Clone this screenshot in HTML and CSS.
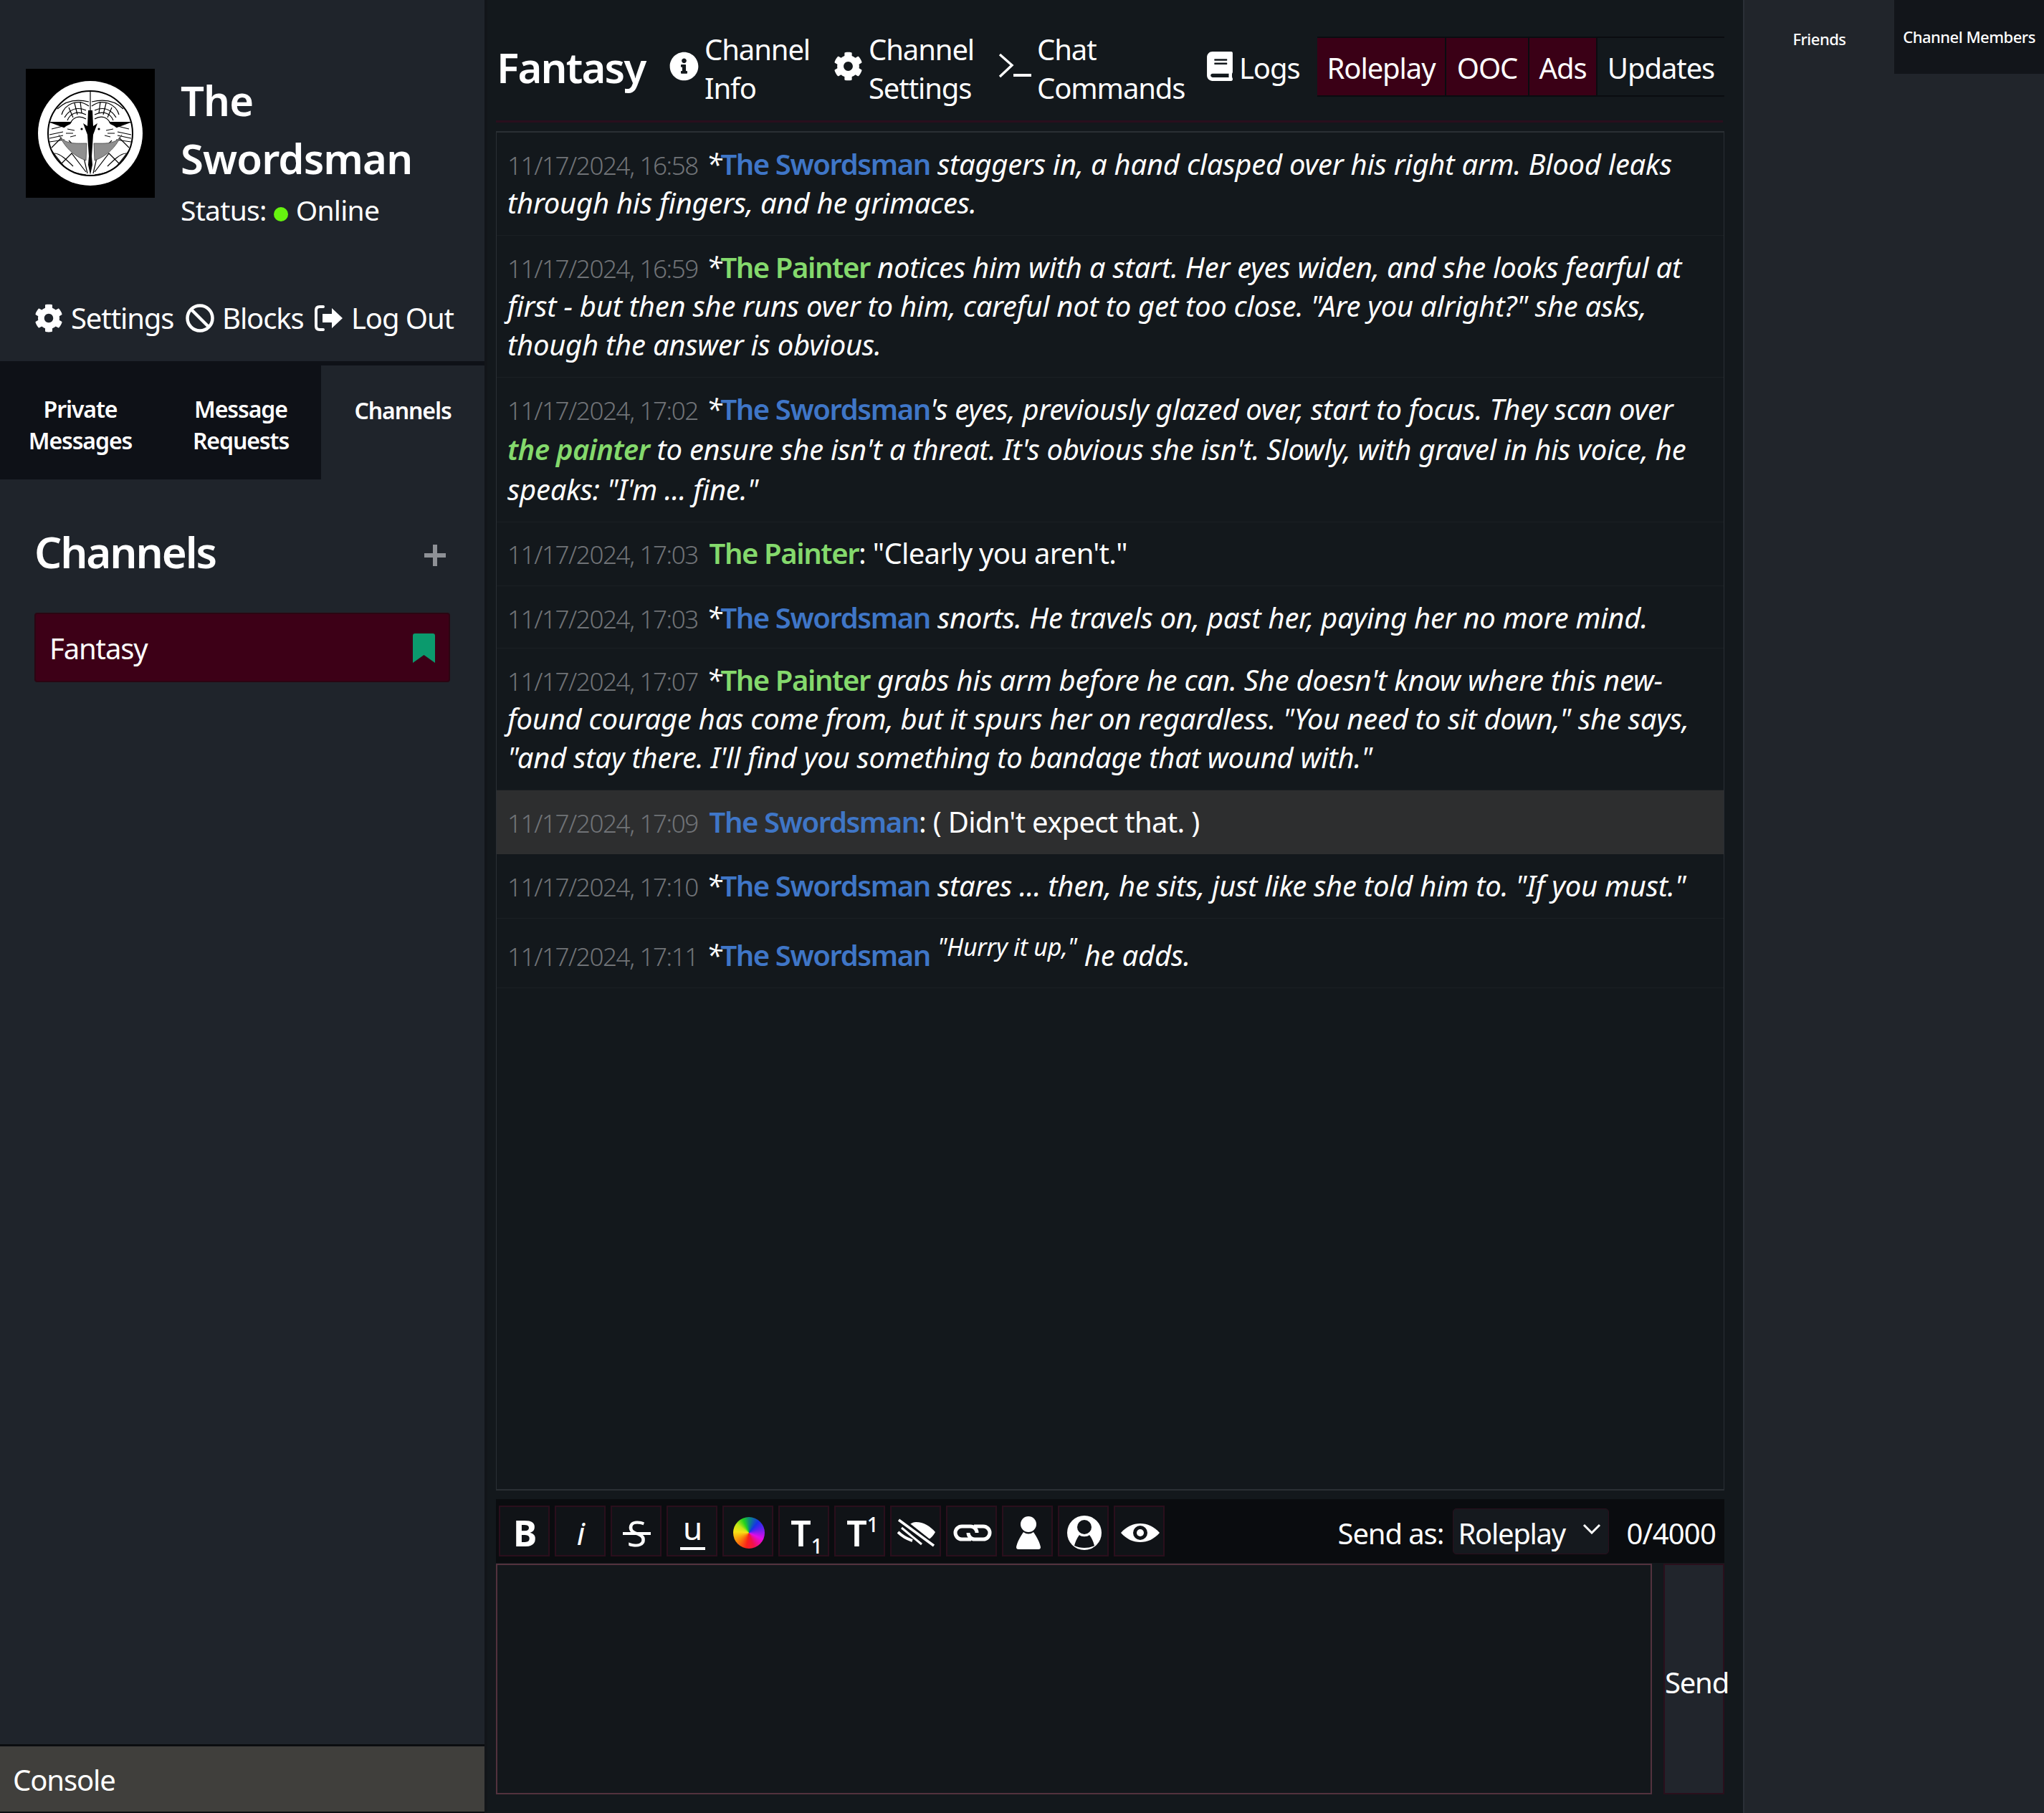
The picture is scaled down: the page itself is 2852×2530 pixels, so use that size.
FILE: index.html
```html
<!DOCTYPE html>
<html lang="en">
<head>
<meta charset="utf-8">
<title>Fantasy</title>
<link rel="stylesheet" href="styles.css">
</head>
<body>
<div class="app">
  <aside class="sidebar">
    <div class="profile">
      <svg class="avatar" viewBox="0 0 180 180">
        <rect width="180" height="180" fill="#000"/>
        <circle cx="90" cy="90" r="73" fill="#fff"/>
        <circle cx="90" cy="90" r="59" fill="#fff" stroke="#000" stroke-width="2"/>
        <g fill="none" stroke="#000" stroke-width="1.2">
          <path d="M90 31V64"/>
          <path d="M44 56C56 44 72 42 88 46M136 56C124 44 108 42 92 46"/>
          <path d="M50 64C54 50 72 40 88 52M130 64C126 50 108 40 92 52"/>
          <path d="M54 68C60 58 70 52 84 58M126 68C120 58 110 52 96 58"/>
          <path d="M58 72C62 62 72 58 84 64M122 72C118 62 108 58 96 64"/>
          <path d="M62 76C66 68 74 64 84 70M118 76C114 68 106 64 96 70"/>
          <path d="M60 54L66 68M68 48L72 64M76 46L78 62M120 54L114 68M112 48L108 64M104 46L102 62"/>
          <path d="M33 92L52 88M33 97L52 93M33 102L54 99M147 92L128 88M147 97L128 93M147 102L126 99"/>
          <path d="M36 84L52 80M144 84L128 80"/>
          <path d="M36 110L50 96M144 110L130 96"/>
          <path d="M40 118C48 118 58 128 66 136M140 118C132 118 122 128 114 136"/>
          <path d="M36 114L50 132L64 118L84 144M144 114L130 132L116 118L96 144"/>
          <path d="M50 132C56 140 68 146 84 148M130 132C124 140 112 146 96 148"/>
          <path d="M60 100L80 120L86 146M120 100L100 120L94 146"/>
        </g>
        <path d="M31 74L58 84L64 74Z M149 74L122 84L116 74Z" fill="#000"/>
        <path d="M46 92C54 106 70 104 85 104L84 128C68 122 56 112 46 92Z M134 92C126 106 110 104 95 104L96 128C112 122 124 112 134 92Z" fill="#8f8f8f" stroke="#444" stroke-width=".8"/>
        <path d="M52 84C60 74 76 74 84 84C86 92 82 100 70 100C60 100 54 94 52 84Z" fill="#fff"/>
        <path d="M128 84C120 74 104 74 96 84C94 92 98 100 110 100C120 100 126 94 128 84Z" fill="#fff"/>
        <path d="M58 84L68 86M56 90L66 90M62 95L70 93M122 84L112 86M124 90L114 90M118 95L110 93" stroke="#000" stroke-width="1"/>
        <circle cx="78" cy="84" r="1.6" fill="#000"/>
        <circle cx="102" cy="84" r="1.6" fill="#000"/>
        <path d="M87 58L93 58L94 80L100 76L94 92L92 122L93 134L90 148L87 134L88 122L86 92L80 76L86 80Z" fill="#000"/>
      </svg>
      <div class="identity">
        <h1 class="username">The<br>Swordsman</h1>
        <p class="status">Status: <span class="dot"></span> Online</p>
      </div>
    </div>
    <nav class="actions">
      <a class="action action-settings">
        <svg class="ico" viewBox="0 0 512 512"><path fill="#fff" d="M487.4 315.7l-42.6-24.6c4.3-23.2 4.3-47 0-70.2l42.6-24.6c4.9-2.8 7.1-8.6 5.5-14-11.1-35.6-30-67.8-54.7-94.6-3.8-4.1-10-5.1-14.8-2.3L380.8 110c-17.9-15.4-38.5-27.3-60.8-35.1V25.8c0-5.6-3.9-10.5-9.4-11.7-36.7-8.2-74.3-7.8-109.2 0-5.5 1.2-9.4 6.1-9.4 11.7V75c-22.2 7.9-42.8 19.8-60.8 35.1L88.7 85.5c-4.9-2.8-11-1.9-14.8 2.3-24.7 26.7-43.6 58.9-54.7 94.6-1.7 5.4.6 11.2 5.5 14L67.3 221c-4.3 23.2-4.3 47 0 70.2l-42.6 24.6c-4.9 2.8-7.1 8.6-5.5 14 11.1 35.6 30 67.8 54.7 94.6 3.8 4.1 10 5.1 14.8 2.3l42.6-24.6c17.9 15.4 38.5 27.3 60.8 35.1v49.2c0 5.6 3.9 10.5 9.4 11.7 36.7 8.2 74.3 7.8 109.2 0 5.5-1.2 9.4-6.1 9.4-11.7v-49.2c22.2-7.9 42.8-19.8 60.8-35.1l42.6 24.6c4.9 2.8 11 1.9 14.8-2.3 24.7-26.7 43.6-58.9 54.7-94.6 1.5-5.5-.7-11.3-5.6-14.1zM256 336c-44.1 0-80-35.9-80-80s35.9-80 80-80 80 35.9 80 80-35.9 80-80 80z"/></svg>
        Settings</a>
      <a class="action action-blocks">
        <svg class="ico" viewBox="0 0 40 40"><circle cx="20" cy="20" r="17.5" fill="none" stroke="#fff" stroke-width="4.5"/><path d="M8 8L32 32" stroke="#fff" stroke-width="4.5"/></svg>
        Blocks</a>
      <a class="action action-logout">
        <svg class="ico" viewBox="0 0 40 40"><path d="M12 4H7Q2 4 2 9V31Q2 36 7 36H12" fill="none" stroke="#fff" stroke-width="4" stroke-linecap="round"/><path d="M24 6L39 20L24 34V26H11V14H24Z" fill="#fff"/></svg>
        Log Out</a>
    </nav>
    <div class="side-tabs">
      <a class="side-tab">Private<br>Messages</a>
      <a class="side-tab">Message<br>Requests</a>
      <a class="side-tab side-tab-active">Channels</a>
    </div>
    <div class="channels-head">
      <h2 class="channels-title">Channels</h2>
      <span class="plus"></span>
    </div>
    <div class="channel-item">
      <span>Fantasy</span>
      <svg class="bookmark" viewBox="0 0 31 41"><path d="M0 3Q0 0 3 0H28Q31 0 31 3V41L15.5 30L0 41Z" fill="#0b9a6d"/></svg>
    </div>
    <div class="side-spacer"></div>
    <div class="console">Console</div>
  </aside>

  <main class="main">
    <header class="chat-header">
      <h2 class="channel-name">Fantasy</h2>
      <a class="head-link link-info">
        <svg class="head-ico" viewBox="0 0 512 512"><path fill="#fff" d="M256 8C119 8 8 119 8 256s111 248 248 248 248-111 248-248S393 8 256 8zm0 110c23.2 0 42 18.8 42 42s-18.8 42-42 42-42-18.8-42-42 18.8-42 42-42zm56 254c0 6.6-5.4 12-12 12h-88c-6.6 0-12-5.4-12-12v-24c0-6.6 5.4-12 12-12h12v-64h-12c-6.6 0-12-5.4-12-12v-24c0-6.6 5.4-12 12-12h64c6.6 0 12 5.4 12 12v100h12c6.6 0 12 5.4 12 12v24z"/></svg>
        <span>Channel<br>Info</span></a>
      <a class="head-link link-settings">
        <svg class="head-ico" viewBox="0 0 512 512"><path fill="#fff" d="M487.4 315.7l-42.6-24.6c4.3-23.2 4.3-47 0-70.2l42.6-24.6c4.9-2.8 7.1-8.6 5.5-14-11.1-35.6-30-67.8-54.7-94.6-3.8-4.1-10-5.1-14.8-2.3L380.8 110c-17.9-15.4-38.5-27.3-60.8-35.1V25.8c0-5.6-3.9-10.5-9.4-11.7-36.7-8.2-74.3-7.8-109.2 0-5.5 1.2-9.4 6.1-9.4 11.7V75c-22.2 7.9-42.8 19.8-60.8 35.1L88.7 85.5c-4.9-2.8-11-1.9-14.8 2.3-24.7 26.7-43.6 58.9-54.7 94.6-1.7 5.4.6 11.2 5.5 14L67.3 221c-4.3 23.2-4.3 47 0 70.2l-42.6 24.6c-4.9 2.8-7.1 8.6-5.5 14 11.1 35.6 30 67.8 54.7 94.6 3.8 4.1 10 5.1 14.8 2.3l42.6-24.6c17.9 15.4 38.5 27.3 60.8 35.1v49.2c0 5.6 3.9 10.5 9.4 11.7 36.7 8.2 74.3 7.8 109.2 0 5.5-1.2 9.4-6.1 9.4-11.7v-49.2c22.2-7.9 42.8-19.8 60.8-35.1l42.6 24.6c4.9 2.8 11 1.9 14.8-2.3 24.7-26.7 43.6-58.9 54.7-94.6 1.5-5.5-.7-11.3-5.6-14.1zM256 336c-44.1 0-80-35.9-80-80s35.9-80 80-80 80 35.9 80 80-35.9 80-80 80z"/></svg>
        <span>Channel<br>Settings</span></a>
      <a class="head-link link-commands">
        <svg class="term-ico" viewBox="0 0 46 36"><path d="M2 2L19 17L2 33" fill="none" stroke="#fff" stroke-width="3.4"/><path d="M21 31H46" stroke="#fff" stroke-width="4"/></svg>
        <span>Chat<br>Commands</span></a>
      <a class="head-link link-logs">
        <svg class="book-ico" viewBox="0 0 448 512"><path fill="#fff" d="M448 360V24c0-13.3-10.7-24-24-24H96C43 0 0 43 0 96v320c0 53 43 96 96 96h328c13.3 0 24-10.7 24-24v-16c0-7.5-3.5-14.3-8.9-18.7-4.2-15.4-4.2-59.3 0-74.7 5.4-4.3 8.9-11.1 8.9-18.6zM128 134c0-3.3 2.7-6 6-6h212c3.3 0 6 2.7 6 6v20c0 3.3-2.7 6-6 6H134c-3.3 0-6-2.7-6-6v-20zm0 64c0-3.3 2.7-6 6-6h212c3.3 0 6 2.7 6 6v20c0 3.3-2.7 6-6 6H134c-3.3 0-6-2.7-6-6v-20zm253.4 250H96c-17.7 0-32-14.3-32-32 0-17.6 14.4-32 32-32h285.4c-1.9 17.1-1.9 46.9 0 64z"/></svg>
        <span>Logs</span></a>
      <div class="filters">
        <a class="filter filter-on f-roleplay">Roleplay</a>
        <a class="filter filter-on f-ooc">OOC</a>
        <a class="filter filter-on f-ads">Ads</a>
        <a class="filter f-updates">Updates</a>
      </div>
    </header>
    <div class="head-rule"></div>

    <section class="log">
      <div class="msg"><span class="time">11/17/2024, 16:58</span> <i>*<b class="blue">The Swordsman</b> staggers in, a hand clasped over his right arm. Blood leaks<br>through his fingers, and he grimaces.</i></div>
      <div class="msg"><span class="time">11/17/2024, 16:59</span> <i>*<b class="green">The Painter</b> notices him with a start. Her eyes widen, and she looks fearful at<br>first - but then she runs over to him, careful not to get too close. "Are you alright?" she asks,<br>though the answer is obvious.</i></div>
      <div class="msg"><span class="time">11/17/2024, 17:02</span> <i>*<b class="blue">The Swordsman</b>'s eyes, previously glazed over, start to focus. They scan over<br><b class="green slanted">the painter</b> to ensure she isn't a threat. It's obvious she isn't. Slowly, with gravel in his voice, he<br>speaks: "I'm ... fine."</i></div>
      <div class="msg msg-after"><span class="time">11/17/2024, 17:03</span> <b class="green">The Painter</b>: "Clearly you aren't."</div>
      <div class="msg msg-short"><span class="time">11/17/2024, 17:03</span> <i>*<b class="blue">The Swordsman</b> snorts. He travels on, past her, paying her no more mind.</i></div>
      <div class="msg"><span class="time">11/17/2024, 17:07</span> <i>*<b class="green">The Painter</b> grabs his arm before he can. She doesn't know where this new-<br>found courage has come from, but it spurs her on regardless. "You need to sit down," she says,<br>"and stay there. I'll find you something to bandage that wound with."</i></div>
      <div class="msg msg-hover"><span class="time">11/17/2024, 17:09</span> <b class="blue">The Swordsman</b>: ( Didn't expect that. )</div>
      <div class="msg"><span class="time">11/17/2024, 17:10</span> <i>*<b class="blue">The Swordsman</b> stares ... then, he sits, just like she told him to. "If you must."</i></div>
      <div class="msg msg-tall"><span class="time">11/17/2024, 17:11</span> <i>*<b class="blue">The Swordsman</b> <sup class="small-sup">"Hurry it up,"</sup> he adds.</i></div>
    </section>

    <div class="toolbar">
      <div class="tools">
        <button class="tool t-bold">B</button>
        <button class="tool t-italic">i</button>
        <button class="tool t-strike"><span class="strike">S</span></button>
        <button class="tool t-under"><span>u</span></button>
        <button class="tool"><span class="wheel"></span></button>
        <button class="tool t-t"><span>T<sub>1</sub></span></button>
        <button class="tool t-t"><span>T<sup>1</sup></span></button>
        <button class="tool">
          <svg class="svg-slash" viewBox="0 0 54 40"><path d="M26 5C37 5 46 11 53 19C49 26 44 30 38 32L16 9C19 7 22 5 26 5Z" fill="#fff"/><path d="M3 1L51 39" stroke="#101317" stroke-width="9"/><path d="M2 2L51 38" stroke="#fff" stroke-width="3.6"/><path d="M6 13L34 36" stroke="#fff" stroke-width="3"/><path d="M1 19C6 24 12 28 21 31" stroke="#fff" stroke-width="4" fill="none"/></svg>
        </button>
        <button class="tool">
          <svg class="svg-link" viewBox="0 0 54 24"><path d="M25 21H12A9 9 0 0 1 12 3H24A9 9 0 0 1 33 12" fill="none" stroke="#fff" stroke-width="5"/><path d="M29 3H42A9 9 0 0 1 42 21H30A9 9 0 0 1 21 12" fill="none" stroke="#fff" stroke-width="5"/></svg>
        </button>
        <button class="tool">
          <svg class="svg-person" viewBox="0 0 36 48"><circle cx="18" cy="12" r="11" fill="#fff"/><path d="M11 23Q18 28 25 23C30 30 34 38 35 44Q35 47 32 47H4Q1 47 1 44C2 38 6 30 11 23Z" fill="#fff"/></svg>
        </button>
        <button class="tool">
          <svg class="svg-user" viewBox="0 0 48 48"><circle cx="24" cy="24" r="24" fill="#fff"/><circle cx="24" cy="16" r="10" fill="#101317"/><path d="M17 27C20 30 28 30 31 27C35 32 37 38 38 42C30 46 18 46 10 42C11 38 13 32 17 27Z" fill="#101317"/></svg>
        </button>
        <button class="tool">
          <svg class="svg-eye" viewBox="0 0 54 28"><path d="M0 14C8 5 17 1 27 1C37 1 46 5 54 14C46 23 37 27 27 27C17 27 8 23 0 14Z" fill="#fff"/><circle cx="27" cy="14" r="10" fill="#101317"/><circle cx="27" cy="14" r="5" fill="#fff"/></svg>
        </button>
      </div>
      <div class="send-opts">
        <span class="send-label">Send as:</span>
        <div class="select">Roleplay
          <svg class="chev" viewBox="0 0 26 15"><path d="M2 2L13 13L24 2" fill="none" stroke="#fff" stroke-width="3"/></svg>
        </div>
        <span class="count">0/4000</span>
      </div>
    </div>
    <div class="composer">
      <div class="input"></div>
      <button class="send">Send</button>
    </div>
  </main>

  <aside class="right">
    <div class="right-tabs">
      <a class="r-tab r-friends">Friends</a>
      <a class="r-tab r-members">Channel Members</a>
    </div>
  </aside>
</div>
</body>
</html>
```

FILE: styles.css
```css
* { box-sizing: border-box; }
html, body { margin: 0; padding: 0; height: 2530px; background: #13181c; }
body { font-family: "Noto Sans", "Open Sans", sans-serif; font-size: 40px; color: #fff; letter-spacing: -1.1px; overflow: hidden; }
h1, h2, p { margin: 0; }
.app { display: flex; height: 2530px; }

/* sidebar */
.sidebar { width: 676px; flex: none; background: #1f242b; display: flex; flex-direction: column; }
.profile { display: flex; gap: 36px; padding: 96px 36px 0; height: 417px; }
.avatar { width: 180px; height: 180px; flex: none; }
.identity { padding-top: 3px; }
.username { font-size: 58px; font-weight: 600; line-height: 81px; letter-spacing: -.9px; }
.status { font-size: 39px; line-height: 54px; margin-top: 5px; letter-spacing: -.7px; }
.dot { display: inline-block; width: 20px; height: 20px; border-radius: 50%; background: #66f30f; margin: 0 1px; vertical-align: -1px; }
.actions { display: flex; height: 87px; padding-left: 48px; align-items: flex-start; font-size: 40px; line-height: 54px; }
.action { display: flex; align-items: center; gap: 11px; white-space: nowrap; }
.action-settings { width: 211px; }
.action-blocks { width: 180px; }
.ico { width: 40px; height: 40px; flex: none; }
.side-tabs { display: flex; height: 165px; background: #0e1117; }
.side-tab { width: 224px; text-align: center; font-size: 32px; font-weight: 600; line-height: 44px; padding-top: 45px; letter-spacing: -1.1px; }
.side-tab-active { width: 228px; margin-top: 6px; padding-top: 41px; background: #1f242b; }
.channels-head { display: flex; justify-content: space-between; align-items: center; padding: 32px 54px 0 48px; height: 186px; }
.channels-title { font-size: 60px; font-weight: 600; line-height: 80px; margin-top: -16px; letter-spacing: -2.1px; }
.plus { width: 30px; height: 30px; margin-top: -6px; background: linear-gradient(#8e9196, #8e9196) center / 30px 6px no-repeat, linear-gradient(#8e9196, #8e9196) center / 6px 30px no-repeat; }
.channel-item { display: flex; justify-content: space-between; align-items: center; margin-left: 48px; width: 580px; height: 97px; padding: 2px 19px 0 19px; background: #3d0017; border: 2px solid #2b0512; border-radius: 4px; font-size: 40px; }
.bookmark { width: 31px; height: 41px; }
.side-spacer { flex: 1; }
.console { height: 96px; background: #403f3c; border-top: 3px solid #0b0d10; border-bottom: 2px solid #0b0d10; padding: 20px 0 0 18px; font-size: 40px; line-height: 54px; }

/* main */
.main { width: 1756px; flex: none; border-left: 4px solid #121519; padding: 0 0 0 12px; background: #13181c; }
.chat-header { display: flex; height: 168px; align-items: flex-start; }
.channel-name { font-size: 58px; font-weight: 600; line-height: 80px; padding: 54px 0 0 1px; width: 242px; white-space: nowrap; letter-spacing: -1.8px; }
.head-link { display: flex; font-size: 40px; line-height: 54px; padding-top: 42px; white-space: nowrap; }
.head-ico { width: 41px; height: 41px; margin: 30px 8px 0 0; flex: none; }
.link-info { width: 229px; }
.link-settings { width: 230px; }
.link-commands { width: 291px; }
.term-ico { width: 46px; height: 36px; margin: 32px 8px 0 0; flex: none; }
.link-logs { width: 154px; padding-top: 68px; }
.book-ico { width: 36px; height: 41px; margin: 4px 9px 0 0; flex: none; }
.filters { display: flex; margin-top: 51px; height: 84px; background: #0a0c10; padding: 2px 0; gap: 2px; }
.filter { display: flex; align-items: center; justify-content: center; background: #3a0016; font-size: 40px; height: 80px; padding-top: 3px; }
.f-roleplay { width: 178px; }
.f-ooc { width: 114px; }
.f-ads { width: 93px; }
.f-updates { width: 177px; background: #13181c; }
.head-rule { height: 3px; width: 1712px; background: #2a0f1d; }
.log { margin-top: 12px; width: 1714px; height: 1897px; border: 2px solid #2a2f34; border-left-width: 1px; border-right-width: 1px; }
.msg { padding: 17px 15px 18px; line-height: 54px; border-bottom: 1px solid #1a1f23; white-space: nowrap; letter-spacing: -.7px; }
.msg i { letter-spacing: -.25px; }
.msg-hover { background: #2d2e2f; border-bottom: 0; }
.msg-tall { padding-top: 24px; }
.msg-after { padding-top: 16px; }
.msg-short { padding-bottom: 15px; }
.time { color: #707377; font-size: 35px; font-weight: 300; margin-right: 2px; line-height: 1; letter-spacing: -1.4px; }
.msg b { font-weight: 600; font-style: normal; letter-spacing: -1.4px; margin-left: -2px; }
.msg > b { margin-left: 4px; }
.msg b.slanted { font-style: italic; margin-left: 0; letter-spacing: -.7px; line-height: 58px; }
.blue { color: #3f76c7; }
.green { color: #84d96c; }
.small-sup { font-size: 34px; line-height: 0; vertical-align: 14px; }

.toolbar { display: flex; justify-content: space-between; width: 1714px; height: 89px; margin-top: 12px; background: #0a0c0f; padding: 9px 12px 0 4px; }
.tools { display: flex; gap: 7px; }
.tool { width: 71px; height: 71px; padding: 4px 0 0 2px; display: flex; align-items: center; justify-content: center; background: #101317; border: 2px solid #2a0f1c; color: #fff; font-family: inherit; line-height: 1; }
.t-bold { font-size: 50px; font-weight: 700; }
.t-italic { font-size: 44px; font-style: italic; }
.t-strike { font-size: 50px; }
.strike { position: relative; }
.strike::after { content: ""; position: absolute; left: -6px; right: -6px; top: 50%; height: 4px; margin-top: -1px; background: #fff; }
.t-under { font-size: 44px; }
.t-under span { border-bottom: 4px solid #fff; padding: 0 4px 5px; line-height: 44px; margin-top: -4px; }
.t-t { font-size: 50px; font-weight: 600; padding-left: 8px; }
.t-t span { display: block; white-space: nowrap; }
.t-t sub, .t-t sup { font-size: 28px; font-weight: 500; line-height: 0; letter-spacing: 0; }
.t-t sub { vertical-align: -10px; }
.t-t sup { vertical-align: 20px; }
.wheel { width: 44px; height: 44px; border-radius: 50%; background: conic-gradient(#0b8f7a 0deg, #1632e8 40deg, #5c22f0 70deg, #e40be8 115deg, #f0124a 160deg, #f9221a 190deg, #fa8a0a 235deg, #f7e316 275deg, #c3e616 305deg, #25d41a 335deg, #0b8f7a 360deg); }
.svg-slash { width: 54px; height: 40px; }
.svg-link { width: 54px; height: 24px; }
.svg-person { width: 36px; height: 48px; }
.svg-user { width: 48px; height: 48px; }
.svg-eye { width: 54px; height: 28px; }
.send-opts { display: flex; align-items: flex-start; font-size: 40px; line-height: 54px; }
.send-label { padding-top: 12px; width: 160px; white-space: nowrap; }
.select { display: flex; align-items: center; justify-content: space-between; width: 218px; height: 64px; margin-top: 4px; padding: 6px 10px 0 7px; background: #15191e; border: 1px solid #2a0f1c; border-radius: 5px; letter-spacing: -1.3px; }
.chev { width: 26px; height: 15px; margin-top: -14px; }
.count { padding: 12px 0 0 25px; white-space: nowrap; letter-spacing: -.8px; }
.composer { display: flex; width: 1714px; height: 322px; margin-top: 1px; }
.input { width: 1613px; height: 322px; background: #13171b; border: 2px solid #52323e; }
.send { margin-left: 16px; width: 85px; height: 322px; background: #21252c; border: 2px solid #2a0f1c; color: #fff; font-family: inherit; font-size: 40px; letter-spacing: -1.2px; padding: 8px 0 0; white-space: nowrap; overflow: visible; display: flex; align-items: center; }

/* right */
.right { flex: 1; background: #21252b; border-left: 2px solid #2a2f36; }
.right-tabs { display: flex; }
.r-tab { font-size: 22px; line-height: 32px; letter-spacing: -.5px; height: 103px; text-align: center; white-space: nowrap; }
.r-friends { width: 209px; padding-top: 38px; font-weight: 500; }
.r-members { flex: 1; background: #12151a; padding-top: 35px; font-weight: 500; }
```
